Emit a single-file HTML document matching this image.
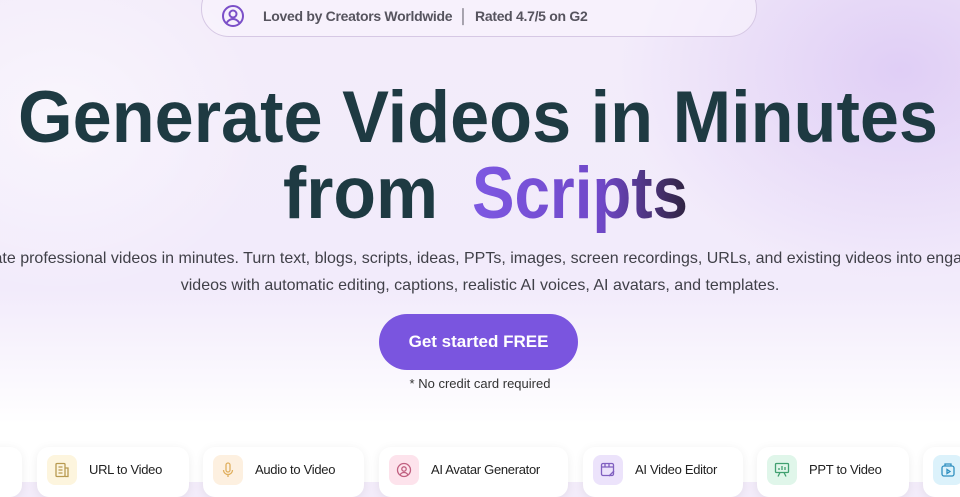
<!DOCTYPE html>
<html><head><style>
body{margin:0;width:960px;height:482px;overflow:hidden;font-family:"Liberation Sans",sans-serif;
background:linear-gradient(180deg,#f3ecfa 0%,#f2ebfb 60%,#fbf9fe 80%,#fff 88%);position:relative}
.bg{position:absolute;inset:0;background:radial-gradient(ellipse 400px 300px at 900px 70px,rgba(200,170,240,.45),transparent 70%),radial-gradient(ellipse 300px 250px at 60px 120px,rgba(255,255,255,.5),transparent 70%)}
.badge{position:absolute;left:201px;top:-20px;width:554px;height:55px;border:1px solid #d6c8e4;border-radius:28px;background:rgba(250,245,253,.6)}
.badge span{position:absolute;left:61px;top:27px;font-size:14px;font-weight:bold;color:#56545e;letter-spacing:-0.3px}
.sub{position:absolute;left:-40px;width:1040px;text-align:center;font-size:16px;color:#404048;line-height:27px;top:245px}
.btn{position:absolute;left:379px;top:314px;width:199px;height:56px;border-radius:28px;background:#7a55df;color:#fff;font-weight:bold;font-size:17px;text-align:center;line-height:56px}
.note{position:absolute;top:376px;width:960px;text-align:center;font-size:13px;color:#333}
.card{position:absolute;top:447px;height:50px;background:#fff;border-radius:12px;box-shadow:0 2px 10px rgba(0,0,0,.07)}
.card i{position:absolute;left:10px;top:8px;width:30px;height:30px;border-radius:8px}
.card i svg{position:absolute;left:7px;top:7px}
.card b{position:absolute;left:52px;top:15px;font-weight:normal;font-size:13px;color:#222;letter-spacing:-0.3px}
</style></head><body>
<div class="bg"></div>
<div class="badge"><svg style="position:absolute;left:19px;top:23px" width="24" height="24" viewBox="0 0 24 24" fill="none" stroke="#7b4fc8" stroke-width="2"><circle cx="12" cy="12" r="10"/><circle cx="12" cy="10" r="3.5"/><path d="M5.5 19c2-3 4-4 6.5-4s4.5 1 6.5 4"/></svg><span>Loved by Creators Worldwide &nbsp;│&nbsp; Rated 4.7/5 on G2</span></div>
<svg style="position:absolute;left:0;top:0" width="960" height="240">
<defs><linearGradient id="g" x1="0" x2="1"><stop offset="0" stop-color="#7d58e2"/><stop offset=".6" stop-color="#7048c8"/><stop offset="1" stop-color="#2f2340"/></linearGradient></defs>
<text x="18" y="142" textLength="920" lengthAdjust="spacingAndGlyphs" font-family="Liberation Sans" font-weight="bold" font-size="73" fill="#1e3a42">Generate Videos in Minutes</text>
<text x="283" y="218" textLength="155" lengthAdjust="spacingAndGlyphs" font-family="Liberation Sans" font-weight="bold" font-size="73" fill="#1e3a42">from</text>
<text x="472" y="218" textLength="216" lengthAdjust="spacingAndGlyphs" font-family="Liberation Sans" font-weight="bold" font-size="73" fill="url(#g)">Scripts</text>
</svg>
<div class="sub">Create professional videos in minutes. Turn text, blogs, scripts, ideas, PPTs, images, screen recordings, URLs, and existing videos into engaging<br>videos with automatic editing, captions, realistic AI voices, AI avatars, and templates.</div>
<div class="btn">Get started FREE</div>
<div class="note">* No credit card required</div>
<div class="card" style="left:-40px;width:62px"></div>
<div class="card" style="left:37px;width:152px"><i style="background:#fdf5de"><svg width="16" height="16" viewBox="0 0 16 16" fill="none" stroke="#b89a50" stroke-width="1.3"><rect x="2" y="1.5" width="9" height="13" rx="1"/><path d="M11 6h3v8.5H11M4.5 5h4M4.5 8h4M4.5 11h4"/></svg></i><b>URL to Video</b></div>
<div class="card" style="left:203px;width:161px"><i style="background:#fdf0e0"><svg width="16" height="16" viewBox="0 0 16 16" fill="none" stroke="#e0b060" stroke-width="1.3"><rect x="6" y="1" width="4" height="9" rx="2"/><path d="M3.5 8a4.5 4.5 0 0 0 9 0M8 12.5V15"/></svg></i><b>Audio to Video</b></div>
<div class="card" style="left:379px;width:189px"><i style="background:#fde3ec"><svg width="16" height="16" viewBox="0 0 16 16" fill="none" stroke="#c06080" stroke-width="1.3"><circle cx="8" cy="8" r="6.5"/><circle cx="8" cy="7" r="2.2"/><path d="M4 13c1-2 2.5-2.5 4-2.5s3 .5 4 2.5"/></svg></i><b>AI Avatar Generator</b></div>
<div class="card" style="left:583px;width:160px"><i style="background:#ece3fb"><svg width="16" height="16" viewBox="0 0 16 16" fill="none" stroke="#8060c0" stroke-width="1.3"><rect x="1.5" y="1.5" width="12" height="12" rx="1.5"/><path d="M1.5 5h12M5 1.5V5M9 1.5V5M9 14l5-5"/></svg></i><b>AI Video Editor</b></div>
<div class="card" style="left:757px;width:152px"><i style="background:#e0f6ea"><svg width="16" height="16" viewBox="0 0 16 16" fill="none" stroke="#40a070" stroke-width="1.3"><rect x="1.5" y="1.5" width="13" height="9" rx="1"/><path d="M5 8V6M8 8V4M11 8V5M6 10.5l-2 4M10 10.5l2 4"/></svg></i><b>PPT to Video</b></div>
<div class="card" style="left:923px;width:80px"><i style="background:#dcf2fb"><svg width="16" height="16" viewBox="0 0 16 16" fill="none" stroke="#3090c0" stroke-width="1.3"><rect x="2" y="4" width="12" height="10" rx="2"/><path d="M5 4V2h6v2M7 7.5v4l3-2z"/></svg></i></div>
</body></html>
